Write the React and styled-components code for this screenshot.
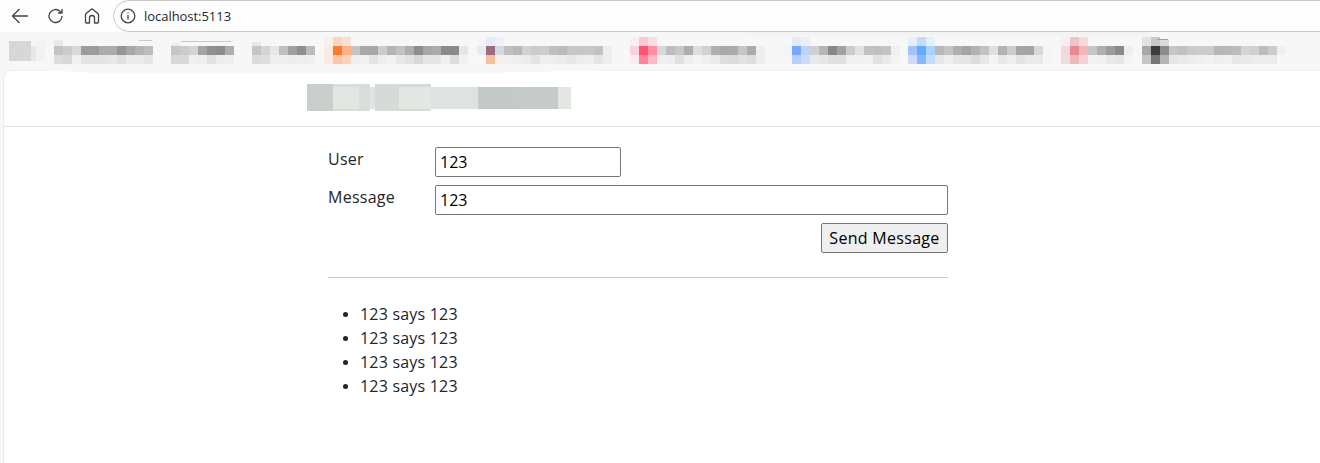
import React from "react";
import styled, { createGlobalStyle } from "styled-components";

const Global = createGlobalStyle`
  html, body { margin: 0; padding: 0; background: #f7f7f7; }
  body { font-family: "Open Sans", "Liberation Sans", sans-serif; color: #212529; }
`;

const Frame = styled.div`
  width: 1320px;
  height: 463px;
  overflow: hidden;
  display: flex;
  flex-direction: column;
`;

const Toolbar = styled.div`
  height: 32px;
  background: #fdfdfd;
  display: flex;
  align-items: center;
  padding-left: 10px;
  flex: none;
`;

const NavIcon = styled.svg`
  width: 20px;
  height: 20px;
  margin-right: ${(p) => (p.$flush ? 0 : 16)}px;
  fill: none;
  stroke: #454545;
  stroke-width: 1.3;
  stroke-linejoin: round;
  flex: none;
`;

const AddressBar = styled.div`
  flex: 1;
  height: 32px;
  box-sizing: border-box;
  margin-left: -5px;
  margin-right: -20px;
  border: 1px solid #c9c9c9;
  border-radius: 16px 0 0 16px;
  background: #fdfdfd;
  display: flex;
  align-items: center;
  padding-left: 4px;
  gap: 6px;
`;

const Url = styled.span`
  font-size: 13px;
  color: #26282b;
  letter-spacing: -0.04px;
`;

const BookmarkBar = styled.div`
  height: 38px;
  flex: none;
  background: #f7f7f7;
  position: relative;
  z-index: 1;
`;

const Mosaic = styled.svg`
  display: block;
  overflow: visible;
  shape-rendering: crispEdges;
`;

const Page = styled.div`
  flex: 1;
  margin-left: 3px;
  background: #fff;
  border-left: 1px solid #ececec;
  border-top: 1px solid #f0f0f0;
  border-radius: 8px 0 0 0;
`;

const Header = styled.header`
  height: 56px;
  box-sizing: border-box;
  border-bottom: 1px solid #e2e2ea;
  padding: 13px 0 0 303px;
`;

const Container = styled.main`
  width: 620px;
  margin-left: 324px;
  padding-top: 20px;
  font-size: 16px;
  line-height: 24px;
`;

const FieldRow = styled.div`
  display: grid;
  grid-template-columns: 107px 1fr;
  margin-bottom: 8px;
`;

const FieldLabel = styled.label`
  line-height: 24px;
  font-size: 16px;
  letter-spacing: 0.25px;
`;

const TextInput = styled.input`
  box-sizing: border-box;
  height: 30px;
  width: ${(p) => p.$width || "100%"};
  padding: 1px 4px;
  border: 1px solid #767676;
  border-radius: 2px;
  background: #fff;
  color: #000;
  font: 16px "Open Sans", sans-serif;
`;

const Actions = styled.div`
  display: flex;
  justify-content: flex-end;
`;

const SendButton = styled.button`
  box-sizing: border-box;
  width: 127px;
  height: 30px;
  padding: 0;
  border: 1px solid #767676;
  border-radius: 2px;
  background: #efefef;
  color: #000;
  font: 16px "Open Sans", sans-serif;
  letter-spacing: 0.3px;
`;

const Rule = styled.hr`
  margin: 24px 0 24px;
  border: 0;
  border-top: 1px solid #c8c8c8;
`;

const Messages = styled.ul`
  margin: 0;
  padding-left: 32px;
  list-style: disc;
  letter-spacing: 0.2px;
  & li::marker { font-size: 14px; }
`;

const g = (s) => s.split(" ").map((c) => (c.length === 2 ? `#${c}${c}${c}` : `#${c}`));

const rows = [
  { x: 54, y: 46, c: "c4 cc d8 9c 9c ac ac 96 a8 b4 bc" },
  { x: 54, y: 55, c: "dd d8 f0 e4 e4 e4 e8 e0 ea ea e6" },
  { x: 171, y: 46, c: "c6 cc d4 a4 90 8c ae" },
  { x: 171, y: 55, c: "d8 d8 f0 ee e2 ec ee" },
  { x: 252, y: 46, c: "c4 d4 e6 c0 a0 8e bc" },
  { x: 252, y: 55, c: "dc de ee ee ec ee f0" },
  { x: 324, y: 37, c: "faf0ea f9d5be fae0d0" },
  { x: 324, y: 46, c: "fbeae2 ff7a2a fdb184 c4 a8 a8 cc b4 c2 ae 8e a6 ac 8a 8a e6" },
  { x: 324, y: 55, c: "fbeae4 fac7ab fbd3bb ee f0 e4 ee f2 e8 e2 d8 e6 e6 f0 dc f2" },
  { x: 477, y: 37, c: "f4f5f9 e4eaf7 eef2f7" },
  { x: 477, y: 46, c: "e8ebf5 9b6e7c d4d8e4 c0 b8 d2 cc ce c0 ba c6 c6 c8 c2 ee" },
  { x: 477, y: 55, c: "f8f8f8 f4c09c f9efe9 f0 ee ec e4 ee ee ec e8 ec ee e4 ee" },
  { x: 630, y: 37, c: "f7f0f2 f9c9d3 f8dfe4" },
  { x: 630, y: 46, c: "f9d3dc ff5570 ff8fa2 d8 bc c8 ae de d2 b0 a8 ac c6 ac ee" },
  { x: 630, y: 55, c: "f8ecee ff8499 fbb8c5 f0 ee e0 ee f4 f0 ea de dc e2 de ee" },
  { x: 783, y: 37, c: "f6f7f9 e2eaf7 eaf0f8" },
  { x: 783, y: 46, c: "f2f4f9 78a8fa bcd2fb d0 b6 88 a2 cc e2 c2 c0 c4 f0" },
  { x: 783, y: 55, c: "f7f7f7 b4cffa cadcf9 e8 e6 e0 e0 f0 f0 f2 e2 ea f4" },
  { x: 908, y: 37, c: "e6eefa bddff8 e2f0f9" },
  { x: 908, y: 46, c: "a0c4fa 60acff a8d4fc b8 c4 ae a4 b2 c2 e0 b2 cc a6 a4 d8 f4" },
  { x: 908, y: 55, c: "ccdcf8 8ab6fb c8dcf8 e8 ee e6 e6 dc e8 f4 e8 ee e4 ea ea f5" },
  { x: 1061, y: 37, c: "f8eef0 efc4c8 f4dade" },
  { x: 1061, y: 46, c: "f3d8dc e8888f efb6bc c6 b0 9c 8a ee" },
  { x: 1061, y: 55, c: "f3dade edb8bc f3d2d6 f2 f0 e8 e6 f5" },
  { x: 1142, y: 46, c: "a8 3c 8c c6 c0 ca cc cc b6 b8 bc d4 d0 bc cc f0" },
  { x: 1142, y: 55, c: "c6 76 b4 e6 ea ec f0 f2 ee f0 e8 ea ec ec ec" },
];

const extras = [
  [9, 41, 22, 20, "#d6d8d8"], [31, 46, 5, 15, "#e8e8e8"], [36, 41, 9, 20, "#f2f2f2"],
  [54, 40, 9, 6, "#e8e8e8"], [139, 40, 13, 1, "#c8c8c8"], [171, 43, 9, 3, "#ededed"],
  [181, 41, 50, 1, "#c8c8c8"], [252, 42, 9, 4, "#e8e8e8"],
  [1142, 37, 9, 9, "#e2e2e2"], [1151, 37, 9, 9, "#c8c8c8"], [1160, 40, 9, 6, "#dcdcdc"], [1157, 39, 11, 1, "#a0a0a0"],
];

const title = [
  [307, 84, 26, 27, "#c9cfcb"], [333, 84, 26, 27, "#d9dedb"], [333, 87, 26, 22, "#e2e7e3"],
  [359, 84, 11, 27, "#d9dedb"], [370, 87, 5, 22, "#e0e4e2"], [375, 84, 24, 27, "#d6dbd8"],
  [399, 84, 32, 27, "#d6dbd8"], [399, 87, 32, 22, "#e4e8e4"], [431, 87, 47, 22, "#dfe3e0"],
  [478, 87, 40, 22, "#c4cac6"], [518, 87, 40, 22, "#c6cbc8"], [558, 87, 13, 22, "#e2e7e2"],
];

function App() {
  return (
    <Frame>
      <Global />
      <Toolbar>
        <NavIcon viewBox="0 0 20 20"><path d="M18 10H2.5M9.5 3L2.5 10l7 7" /></NavIcon>
        <NavIcon viewBox="0 0 20 20"><path d="M16 10a6.5 6.5 0 1 1-2-4.7L16 7M16 3v4h-4" /></NavIcon>
        <NavIcon viewBox="0 0 20 20"><path d="M3.5 16.2V8.6a1 1 0 0 1 .4-.8L9 3.4a1.5 1.5 0 0 1 2 0l5.100 4.400a1 1 0 0 1 .4.8v7.600a.8.8 0 0 1-.8.8h-3.200v-5a2.500 2.500 0 0 0-5 0v5H4.300a.8.8 0 0 1-.8-.8z" /></NavIcon>
        <AddressBar>
          <NavIcon $flush viewBox="0 0 20 20"><circle cx="10" cy="10" r="6.8" /><path d="M10 9v4.500M10 6.400v1.200" /></NavIcon>
          <Url>localhost:5113</Url>
        </AddressBar>
      </Toolbar>
      <BookmarkBar>
        <Mosaic width="1320" height="38" viewBox="0 32 1320 38">
          <path d="M745 32 L1150 32 L1150 36 L745 36 Z" fill="#f3f3f3" />
          <path d="M36 70 L620 70 L480 73 L100 73 Z" fill="#f7f7f7" />
          {extras.map(([x, y, w, h, c], i) => <rect key={i} x={x} y={y} width={w} height={h} fill={c} />)}
          {rows.flatMap((r) => g(r.c).map((c, i) => (
            <rect key={`${r.x}-${r.y}-${i}`} x={r.x + i * 9} y={r.y} width="9" height="9" fill={c} />
          )))}
        </Mosaic>
      </BookmarkBar>
      <Page>
        <Header>
          <Mosaic width="264" height="27" viewBox="307 84 264 27">
            {title.map(([x, y, w, h, c], i) => <rect key={i} x={x} y={y} width={w} height={h} fill={c} />)}
          </Mosaic>
        </Header>
        <Container>
          <FieldRow>
            <FieldLabel>User</FieldLabel>
            <TextInput defaultValue="123" $width="186px" />
          </FieldRow>
          <FieldRow>
            <FieldLabel>Message</FieldLabel>
            <TextInput defaultValue="123" />
          </FieldRow>
          <Actions><SendButton>Send Message</SendButton></Actions>
          <Rule />
          <Messages>
            <li>123 says 123</li>
            <li>123 says 123</li>
            <li>123 says 123</li>
            <li>123 says 123</li>
          </Messages>
        </Container>
      </Page>
    </Frame>
  );
}

export default App;
